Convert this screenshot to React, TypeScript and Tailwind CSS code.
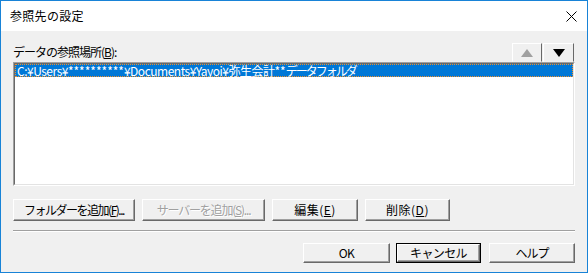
import React from "react";

const font = { fontFamily: '"Noto Sans CJK JP", "Noto Sans", sans-serif' };

function U({ c }: { c: string }) {
  return <span className="underline underline-offset-[1px]">{c}</span>;
}

function Btn({
  children,
  w,
  h = "h-[22px]",
  disabled = false,
  def = false,
  track = "tracking-[-0.6px]",
}: {
  children: React.ReactNode;
  w: string;
  h?: string;
  disabled?: boolean;
  def?: boolean;
  track?: string;
}) {
  const inner = (
    <div
      className={`flex h-full w-full items-center justify-center border border-t-white border-l-white border-r-[#696969] border-b-[#696969] bg-[#f0f0f0] shadow-[inset_-1px_-1px_0_#a0a0a0] ${
        disabled ? "text-[#a0a0a0] [text-shadow:1px_1px_0_#ffffff]" : "text-black"
      }`}
    >
      <span className={`whitespace-nowrap ${track}`}>{children}</span>
    </div>
  );
  if (def) {
    return <div className={`${w} ${h} shrink-0 border border-black`}>{inner}</div>;
  }
  return <div className={`${w} ${h} shrink-0`}>{inner}</div>;
}

export default function App() {
  return (
    <div
      className="flex h-[273px] w-[588px] flex-col border border-[#1883d7] bg-[#f0f0f0] text-[12px] leading-[14px] text-black"
      style={font}
    >
      {/* title bar */}
      <div className="flex h-[30px] shrink-0 items-center justify-between bg-white pl-[9px] pr-[9px]">
        <span className="text-[12px] tracking-[0.3px]">参照先の設定</span>
        <svg width="11" height="11" viewBox="0 0 11 11" className="mr-[1px]">
          <path d="M0.5 0.5 L10.5 10.5 M10.5 0.5 L0.5 10.5" stroke="#000" strokeWidth="1" />
        </svg>
      </div>

      {/* body */}
      <div className="flex flex-1 flex-col px-3 pt-3">
        <div className="flex h-[19px] items-end justify-between">
          <span className="mb-[3px] tracking-[-1px]">
            データの参照場所(<U c="B" />):
          </span>
          <div className="flex h-[19px] gap-[1px] pr-[1px]">
            <div className="flex w-[30px] items-center justify-center border border-t-white border-l-white border-r-[#696969] border-b-[#f0f0f0] bg-[#f0f0f0]">
              <svg width="12" height="8" viewBox="0 0 12 8">
                <path d="M6 0 L12 8 L0 8 Z" fill="#a0a0a0" />
              </svg>
            </div>
            <div className="flex w-[31px] items-center justify-center border border-t-white border-l-white border-r-[#696969] border-b-[#f0f0f0] bg-[#f0f0f0]">
              <svg width="12" height="8" viewBox="0 0 12 8">
                <path d="M0 0 L12 0 L6 8 Z" fill="#000" />
              </svg>
            </div>
          </div>
        </div>

        {/* list box */}
        <div className="h-[124px] border border-t-[#a0a0a0] border-l-[#a0a0a0] border-r-white border-b-white">
          <div className="h-full border border-t-[#696969] border-l-[#696969] border-r-[#e3e3e3] border-b-[#e3e3e3] bg-white">
            <div className="flex h-[13px] items-center border border-dotted border-[#f0902c] bg-[#0078d7] pl-[1px] text-white">
              <span className="whitespace-nowrap tracking-[-0.5px]">
                C:¥Users¥<span className="tracking-[0px]">**********</span>¥Documents¥Yayoi¥弥生会計<span className="tracking-[0px]">**</span><span className="tracking-[-2px]">データフォルダ</span>
              </span>
            </div>
          </div>
        </div>

        {/* action buttons */}
        <div className="mt-[13px] flex gap-[7px]">
          <Btn w="w-[122px]" track="tracking-[-1.5px]">
            フォルダーを追加(<U c="F" />)...
          </Btn>
          <Btn w="w-[123px]" disabled track="tracking-[-1.2px]">
            サーバーを追加(<U c="S" />)...
          </Btn>
          <Btn w="w-[86px]" track="tracking-[0.5px]">
            編集(<U c="E" />)
          </Btn>
          <Btn w="w-[85px]" track="tracking-[0.5px]">
            削除(<U c="D" />)
          </Btn>
        </div>

        {/* separator */}
        <div className="mt-[9px] h-[2px] border-t border-b border-t-[#a0a0a0] border-b-white" />

        {/* bottom buttons */}
        <div className="mt-[11px] flex justify-end">
          <Btn w="w-[87px]" h="h-[20px]">
            OK
          </Btn>
          <div className="w-[6px]" />
          <Btn w="w-[85px]" h="h-[20px]" def>
            キャンセル
          </Btn>
          <div className="w-[8px]" />
          <Btn w="w-[86px]" h="h-[20px]" track="tracking-[-1px]">
            ヘルプ
          </Btn>
        </div>
      </div>
    </div>
  );
}
